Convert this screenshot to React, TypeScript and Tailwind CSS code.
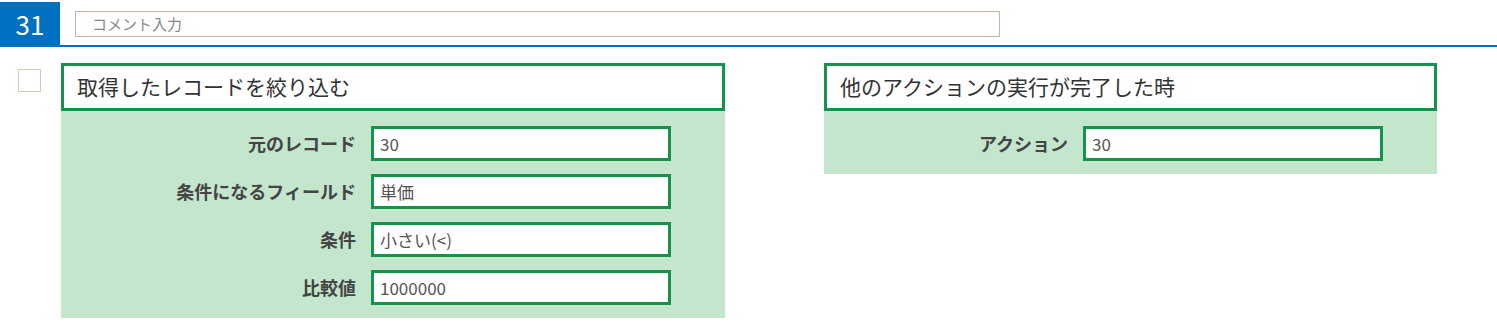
const font = { fontFamily: '"Noto Sans CJK JP", "Noto Sans", sans-serif' };

type Field = { label: string; value: string };

function Card({ title, fields, width }: { title: string; fields: Field[]; width: string }) {
  return (
    <div className={`${width} shrink-0`}>
      <div className="h-[48px] border-[3px] border-[#14944a] bg-white flex items-center px-[13px] text-[21px] text-[#333]">
        {title}
      </div>
      <div className="bg-[#c3e6cd] pt-[15px] pb-[13px] pr-[54px] flex flex-col gap-[13px]">
        {fields.map((f) => (
          <div key={f.label} className="flex items-center justify-end">
            <span className="text-[18px] font-bold text-[#444] mr-[15px]">{f.label}</span>
            <div className="w-[300px] h-[35px] border-[3px] border-[#14944a] bg-white flex items-center px-[6px] text-[17px] text-[#555]">
              {f.value}
            </div>
          </div>
        ))}
      </div>
    </div>
  );
}

export default function App() {
  return (
    <div className="w-[1497px] h-[322px] bg-white overflow-hidden" style={font}>
      <div className="flex items-start h-[47px] border-b-2 border-[#0070c0]">
        <div className="mt-[2px] w-[60px] h-[43px] bg-[#0070c0] text-white text-[26px] flex items-center justify-center">
          31
        </div>
        <div className="ml-[15px] mt-[11px] w-[925px] h-[26px] border border-[#c8b4a0] flex items-center pl-[16px] text-[15px] text-[#888]">
          コメント入力
        </div>
      </div>

      <div className="flex items-start mt-[16px]">
        <div className="ml-[18px] mt-[6px] w-[23px] h-[23px] border border-[#d8c8b8] bg-white" />
        <div className="ml-[20px]">
          <Card
            title="取得したレコードを絞り込む"
            width="w-[664px]"
            fields={[
              { label: "元のレコード", value: "30" },
              { label: "条件になるフィールド", value: "単価" },
              { label: "条件", value: "小さい(<)" },
              { label: "比較値", value: "1000000" },
            ]}
          />
        </div>
        <div className="ml-[99px]">
          <Card
            title="他のアクションの実行が完了した時"
            width="w-[613px]"
            fields={[{ label: "アクション", value: "30" }]}
          />
        </div>
      </div>
    </div>
  );
}
